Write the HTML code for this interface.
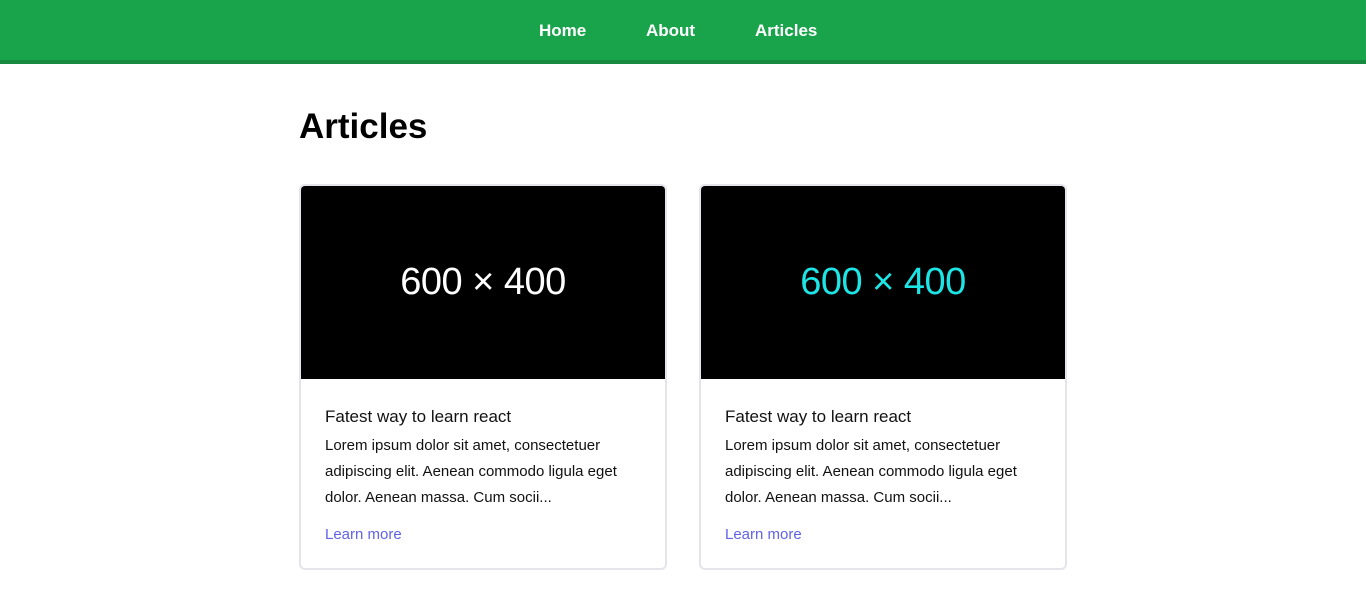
<!DOCTYPE html>
<html><head><style>
*{margin:0;padding:0;box-sizing:border-box}
body{width:1366px;height:615px;background:#fff;font-family:"Liberation Sans",sans-serif;overflow:hidden;position:relative}
.nav{position:absolute;left:0;top:0;width:1366px;height:64px;background:#19a44c;border-bottom:4px solid #178a3f}
.nav a{position:absolute;top:21px;color:#fff;font-weight:bold;font-size:17px;text-decoration:none}
h1{position:absolute;left:299px;top:107px;font-size:35px;font-weight:bold;color:#000}
.card{position:absolute;top:184px;width:368px;height:386px;border:2px solid #e4e4ea;border-radius:6px;overflow:hidden}
.img{height:194px;background:#000;display:flex;align-items:center;justify-content:center;font-size:38px;letter-spacing:-0.5px;margin:-1px}
.t{position:absolute;left:24px;top:221px;font-size:17px;color:#111}
.p{position:absolute;left:24px;top:247px;width:320px;font-size:15px;line-height:26px;color:#111}
.l{position:absolute;left:24px;top:340px;font-size:15px;color:#6063e8}
</style></head><body>
<div class="nav"><a style="left:539px">Home</a><a style="left:646px">About</a><a style="left:755px">Articles</a></div>
<h1>Articles</h1>
<div class="card" style="left:299px"><div class="img" style="color:#fff">600 × 400</div>
<div class="t">Fatest way to learn react</div>
<div class="p">Lorem ipsum dolor sit amet, consectetuer adipiscing elit. Aenean commodo ligula eget dolor. Aenean massa. Cum socii...</div>
<div class="l">Learn more</div></div>
<div class="card" style="left:699px"><div class="img" style="color:#1de5e5">600 × 400</div>
<div class="t">Fatest way to learn react</div>
<div class="p">Lorem ipsum dolor sit amet, consectetuer adipiscing elit. Aenean commodo ligula eget dolor. Aenean massa. Cum socii...</div>
<div class="l">Learn more</div></div>
</body></html>
